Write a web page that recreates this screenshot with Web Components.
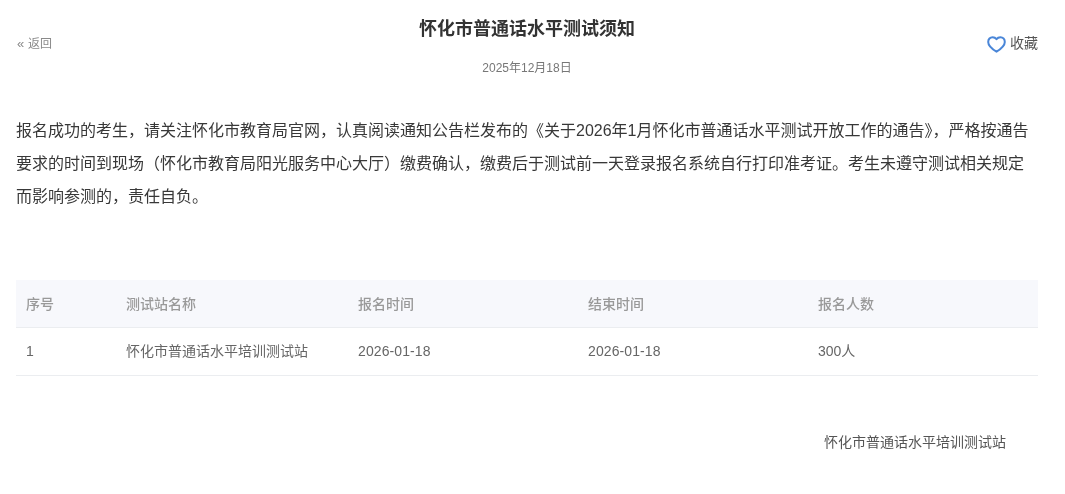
<!doctype html>
<html lang="zh">
<head>
<meta charset="utf-8">
<title>怀化市普通话水平测试须知</title>
<style>
  html, body { margin: 0; background: #fff; }
  body { font-family: "Liberation Sans", "Noto Sans CJK SC", sans-serif; }
</style>
</head>
<body>
<notice-page>
  <notice-header slot="header" date="2025年12月18日">怀化市普通话水平测试须知</notice-header>
  <notice-body slot="body">报名成功的考生，请关注怀化市教育局官网，认真阅读通知公告栏发布的《关于2026年1月怀化市普通话水平测试开放工作的通告》，严格按通告要求的时间到现场（怀化市教育局阳光服务中心大厅）缴费确认，缴费后于测试前一天登录报名系统自行打印准考证。考生未遵守测试相关规定而影响参测的，责任自负。</notice-body>
  <site-table slot="table"></site-table>
  <notice-sign slot="sign">怀化市普通话水平培训测试站</notice-sign>
</notice-page>

<script>
const makeTemplate = (html) => Object.assign(document.createElement('template'), { innerHTML: html });

class BaseElement extends HTMLElement {
  constructor() {
    super();
    this.attachShadow({ mode: 'open' });
    this.shadowRoot.appendChild(this.constructor.template.content.cloneNode(true));
  }
}

class NoticePage extends BaseElement {
  static template = makeTemplate(`
    <style>
      /* own transparent layer keeps the text on grayscale antialiasing, as in the reference */
      :host { display: block; width: 1022px; padding: 0 27px 0 16px; will-change: transform; }
    </style>
    <slot name="header"></slot>
    <slot name="body"></slot>
    <slot name="table"></slot>
    <slot name="sign"></slot>
  `);
}

class NoticeHeader extends BaseElement {
  static template = makeTemplate(`
    <style>
      :host { display: grid; grid-template-columns: 1fr auto 1fr; height: 113px; }
      .back { align-self: start; margin-top: 36px; display: flex; gap: 3px; font-size: 12px; line-height: 16px; color: #8a8a8a; }
      .back i { font-style: normal; font-size: 13px; width: 8px; padding-left: 1px; }
      .middle { text-align: center; padding-top: 18px; }
      h1 { margin: 0; font-size: 18px; line-height: 22px; font-weight: 700; color: #333; }
      .date { margin-top: 20px; font-size: 12px; line-height: 16px; color: #777; }
      .fav { justify-self: end; align-self: start; margin-top: 33px; display: flex; align-items: center; gap: 4px; font-size: 14px; line-height: 20px; color: #555; }
      svg { display: block; margin-top: 2px; }
    </style>
    <div class="back"><i>«</i><span>返回</span></div>
    <div class="middle">
      <h1><slot></slot></h1>
      <div class="date"></div>
    </div>
    <div class="fav">
      <svg width="19" height="17" viewBox="0 0 19 17" fill="none">
        <path d="M9.5 15.7C5.4 13.2 1.2 10.3 1.2 6C1.2 3.2 3.1 1.2 5.6 1.2C7.2 1.2 8.6 1.9 9.5 3.1C10.4 1.9 11.8 1.2 13.4 1.2C15.9 1.2 17.8 3.2 17.8 6C17.8 10.3 13.6 13.2 9.5 15.7Z" stroke="#4a86d8" stroke-width="2" stroke-linejoin="round"/>
      </svg>
      <span>收藏</span>
    </div>
  `);

  connectedCallback() {
    this.shadowRoot.querySelector('.date').textContent = this.getAttribute('date');
  }
}

class NoticeBody extends BaseElement {
  static template = makeTemplate(`
    <style>
      :host { display: block; height: 167px; font-size: 16px; line-height: 33.2px; color: #383838; }
      div { padding-top: 1px; }
    </style>
    <div><slot></slot></div>
  `);
}

class SiteTable extends BaseElement {
  static template = makeTemplate(`
    <style>
      :host { display: block; font-size: 14px; color: #666; }
      .row { display: grid; grid-template-columns: 100px 232px 230px 230px 1fr; align-items: center; height: 47px; border-bottom: 1px solid #ebedf0; }
      .row span { padding: 0 0 3px 10px; }
      .head { background: #f7f8fc; font-weight: 500; color: #999; }
      .head span { padding-bottom: 2px; }
      .row .num { letter-spacing: 0.1px; padding-bottom: 1px; }
    </style>
    <div class="row head">
      <span>序号</span><span>测试站名称</span><span>报名时间</span><span>结束时间</span><span>报名人数</span>
    </div>
    <div class="row">
      <span class="num">1</span><span>怀化市普通话水平培训测试站</span><span class="num">2026-01-18</span><span class="num">2026-01-18</span><span>300人</span>
    </div>
  `);
}

class NoticeSign extends BaseElement {
  static template = makeTemplate(`
    <style>
      :host { display: block; margin-top: 56px; padding-right: 32px; text-align: right; font-size: 14px; line-height: 20px; color: #555; }
    </style>
    <slot></slot>
  `);
}

customElements.define('notice-page', NoticePage);
customElements.define('notice-header', NoticeHeader);
customElements.define('notice-body', NoticeBody);
customElements.define('site-table', SiteTable);
customElements.define('notice-sign', NoticeSign);
</script>
</body>
</html>
